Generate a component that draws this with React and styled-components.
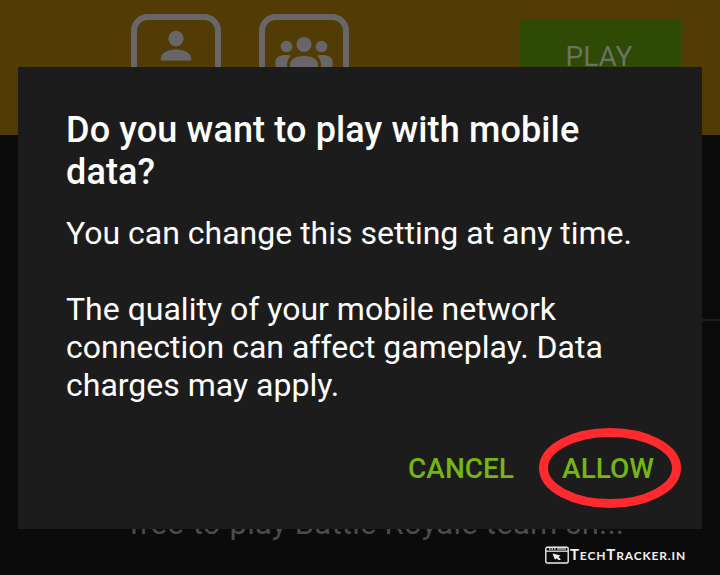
import React from "react";
import styled, { createGlobalStyle } from "styled-components";

const GlobalStyle = createGlobalStyle`
  * { box-sizing: border-box; }
  body { margin: 0; background: #0b0b0b; font-family: Roboto, sans-serif; }
`;

const Screen = styled.main`
  position: relative;
  width: 720px;
  height: 575px;
  overflow: hidden;
  background: #0b0b0b;
  display: flex;
  flex-direction: column;
`;

const Banner = styled.header`
  height: 135px;
  flex: none;
  display: flex;
  align-items: flex-start;
  padding: 14px 39px 0 131px;
  background: #523c05;
`;

const ModeTile = styled.div`
  width: 90px;
  height: 90px;
  margin-right: 38px;
  border: 6px solid #69666a;
  border-radius: 17px;
  display: flex;
  justify-content: center;
  svg { display: block; flex: none; fill: #69666a; }
`;

const PlayButton = styled.div`
  width: 161px;
  height: 76px;
  margin: 5px 0 0 auto;
  padding: 21px 3px 0 0;
  background: #2e4a04;
  color: #6b7166;
  font-size: 28px;
  line-height: 34px;
  text-align: center;
`;

const Divider = styled.hr`
  width: 100%;
  height: 2px;
  margin: 184px 0 0 130px;
  border: 0;
  background: #1d1d1d;
  flex: none;
`;

const Description = styled.p`
  margin: 184px 0 0 129px;
  color: #4b4b4b;
  font-size: 31px;
  line-height: 38px;
  letter-spacing: 0.25px;
  white-space: nowrap;
`;

const Dialog = styled.section`
  position: absolute;
  left: 18px;
  top: 67px;
  width: 684px;
  height: 462px;
  padding: 42px 48px 0;
  background: #1c1c1c;
  color: #fff;
  display: flex;
  flex-direction: column;
`;

const Title = styled.h1`
  margin: 0;
  font-size: 36px;
  font-weight: 500;
  line-height: 42px;
  letter-spacing: 0.13px;
`;

const Message = styled.p`
  margin: ${(p) => p.$gap}px 0 0;
  font-size: 32px;
  line-height: 38px;
  white-space: nowrap;
`;

const Actions = styled.div`
  display: flex;
  justify-content: flex-end;
  align-items: center;
  height: 80px;
  margin: 24px -27px 0 0;
`;

const Action = styled.button`
  position: relative;
  padding: 2px ${(p) => p.$inset || 0}px 0 0;
  width: ${(p) => p.$width}px;
  height: 80px;
  border: 0;
  background: none;
  color: #76b513;
  font: 500 28px/34px Roboto, sans-serif;
  text-align: center;
`;

const Ring = styled.svg`
  position: absolute;
  inset: 0;
`;

const Watermark = styled.footer`
  position: absolute;
  left: 545px;
  top: 544px;
  display: flex;
  align-items: center;
  gap: 1px;
  color: #f2f2f2;
  font: 700 12px/20px Lato, sans-serif;
  white-space: nowrap;
`;

const BrandName = styled.span`
  letter-spacing: 0.85px;
  big { font-size: 15px; }
`;

export default function App() {
  return (
    <>
      <GlobalStyle />
      <Screen>
        <Banner>
          <ModeTile>
            <svg width="78" height="70" viewBox="0 0 78 70">
              <circle cx="39" cy="18.500" r="7.700" />
              <path d="M24 40.500v-2.500c0-6 9-8.500 15-8.500S54 32 54 38v2.500z" />
            </svg>
          </ModeTile>
          <ModeTile>
            <svg width="78" height="70" viewBox="0 0 78 70">
              <circle cx="39" cy="24.500" r="7.500" />
              <circle cx="21.500" cy="26.500" r="5.800" />
              <circle cx="56.500" cy="26.500" r="5.800" />
              <path d="M25 52V45c0-6 6-9 14-9s14 3 14 9v7z" />
              <path d="M10.500 47v-6c0-4 5-6 11-6 2 0 3.500.2 4.500.6-2.500 2.400-4 5.400-4 9V47zM67.500 47v-6c0-4-5-6-11-6-2 0-3.500.2-4.500.6 2.500 2.400 4 5.400 4 9V47z" />
            </svg>
          </ModeTile>
          <PlayButton>PLAY</PlayButton>
        </Banner>
        <Divider />
        <Description>free-to-play Battle Royale team sh...</Description>
        <Dialog role="dialog">
          <Title>Do you want to play with mobile<br />data?</Title>
          <Message $gap={21}>You can change this setting at any time.</Message>
          <Message $gap={38}>
            The quality of your mobile network<br />
            connection can affect gameplay. Data<br />
            charges may apply.
          </Message>
          <Actions>
            <Action $width={156}>CANCEL</Action>
            <Action $width={142} $inset={4}>
              ALLOW
              <Ring width="142" height="80" viewBox="0 0 142 80">
                <ellipse cx="71" cy="40" rx="66.500" ry="35.500" fill="none" stroke="#ff2a2d" strokeWidth="9" />
              </Ring>
            </Action>
          </Actions>
        </Dialog>
        <Watermark>
          <svg width="24" height="18" viewBox="0 0 24 18" fill="none">
            <rect x=".8" y="1.300" width="22.400" height="15.700" rx="1.500" stroke="#eee" strokeWidth="1.400" />
            <path d="M1 5.200h22" stroke="#eee" strokeWidth="1.200" />
            <path d="M4 3h7" stroke="#eee" strokeWidth="1.500" strokeDasharray="1.500 1" />
            <path d="M12 3h9" stroke="#ddd" strokeWidth="1.200" />
            <path d="M7.500 7.500l8 2-2 1.500 2.500 2.500-2 .8-2.500-2-1.500 1.500z" fill="#eee" />
          </svg>
          <BrandName><big>T</big>ECH<big>T</big>RACKER.IN</BrandName>
        </Watermark>
      </Screen>
    </>
  );
}
